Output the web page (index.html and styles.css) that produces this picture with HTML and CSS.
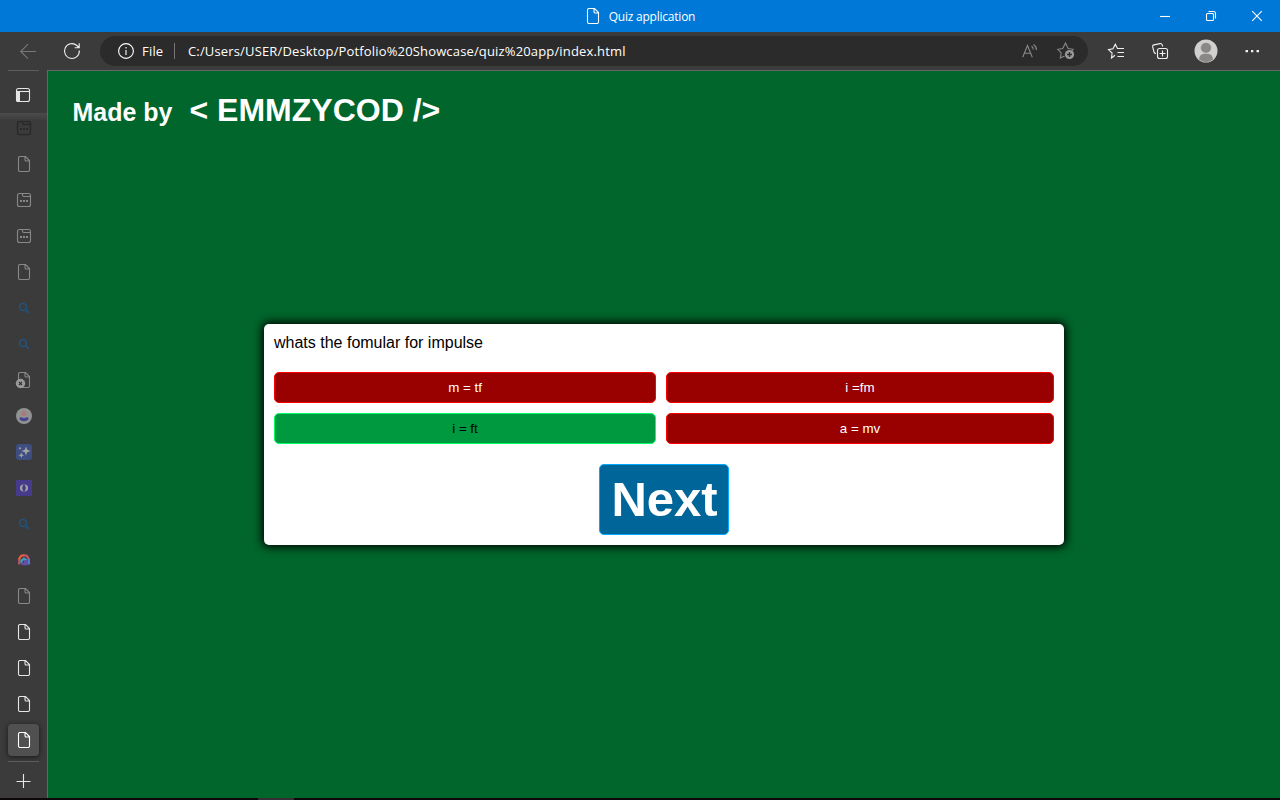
FILE: index.html
```html
<!DOCTYPE html>
<html lang="en">
<head>
<meta charset="utf-8">
<title>Quiz application</title>
<link rel="stylesheet" href="styles.css">
</head>
<body>
<svg class="defs" width="0" height="0">
  <symbol id="page" viewBox="0 0 16 16"><path d="M3.500.5h6l4 4v9.500q0 1.500-1.500 1.500H4Q2.500 15.500 2.500 14V2Q2.500.5 4 .5M9 .5v3.200Q9 5 10.300 5h3.200"/></symbol>
  <symbol id="tab" viewBox="0 0 16 16"><rect x="1.500" y="1.500" width="13" height="13" rx="2"/><path d="M6.500 1.500v1.500q0 1.500 1.500 1.500h6.500"/><path class="solid" d="M4 8h2v2H4zM7 8h2v2H7zM10 8h2v2h-2z"/></symbol>
  <symbol id="search" viewBox="0 0 16 16"><circle cx="7" cy="7" r="3.500"/><path d="M9.500 9.500l3.500 3.500"/></symbol>
</svg>
<div class="window">
  <header class="titlebar">
    <div class="caption"><svg class="icon" viewBox="0 0 16 16"><use href="#page"/></svg><span class="caption-text">Quiz application</span></div>
    <div class="controls">
      <svg class="icon" viewBox="0 0 16 16"><path d="M3 8.500h10"/></svg>
      <svg class="icon" viewBox="0 0 16 16"><rect x="3.500" y="5.500" width="7" height="7" rx="1"/><path d="M5.500 3.500h5q2 0 2 2v5"/></svg>
      <svg class="icon" viewBox="0 0 16 16"><path d="M3.200 3.200l9.600 9.600M12.800 3.200l-9.600 9.600"/></svg>
    </div>
  </header>
  <nav class="toolbar">
    <svg class="icon back" viewBox="0 0 16 16"><path d="M16 8.500H.7M8 1.200L.7 8.500 8 15.700"/></svg>
    <svg class="icon reload" viewBox="0 0 16 16"><path d="M15.300 7.500A7.400 7.400 0 1 1 12.800 2.500L15 4.500M15.200.3v4.500h-4.500"/></svg>
    <div class="address">
      <svg class="icon info" viewBox="0 0 16 16"><circle cx="8" cy="8" r="7.400"/><path d="M8 7v5M8 4v1.400"/></svg>
      <span class="scheme">File</span>
      <span class="bar"></span>
      <span class="url">C:/Users/USER/Desktop/Potfolio%20Showcase/quiz%20app/index.html</span>
      <span class="address-tools">
        <svg class="icon read" viewBox="0 0 16 16"><path d="M.7 14.300L5.500 2.500l4.800 11.800M2.300 10.200h6.300M9.500 3.200q1.800 1 1.800 3.300M11.500 1.500q3 2 3 5.500"/></svg>
        <svg class="icon fav" viewBox="0 0 18 18"><path d="M7.500 14L3.300 16l.9-5L.8 7.300l4.900-.8L8.500 1l2.600 5.500 5 .8-1 1.500"/><circle class="badge" cx="12.500" cy="12.500" r="4.600"/><path class="badge-plus" d="M12.500 10v5M10 12.500h5"/></svg>
      </span>
    </div>
    <div class="actions">
      <svg class="icon" viewBox="0 0 16 16"><path d="M7 12.300L3.500 15l.6-5L.5 6.600l4.500-.8L7.300 1.200l2.200 4.300H16M9.500 9.500h6.500M9.500 13.500h6.500"/></svg>
      <svg class="icon" viewBox="0 0 16 16"><path d="M4 10.500Q2.500 10.500 2 9L.7 4Q.3 2.300 2 1.900L8 .6q1.700-.3 2.200 1.200l.5 1.700"/><rect x="5.500" y="5.500" width="10" height="10" rx="2"/><path d="M10.500 7.500v6M7.500 10.500h6"/></svg>
      <svg class="avatar" viewBox="0 0 24 24"><circle cx="12" cy="12" r="11.500" fill="#d2d0ce"/><path d="M5 20.500q0-6 7-6t7 6q-7 5-14 0z" fill="#8a8886"/><circle cx="12" cy="8.800" r="5.400" fill="#8a8886" stroke="#d2d0ce" stroke-width=".6"/></svg>
      <svg class="icon" viewBox="0 0 16 16"><path class="solid" d="M1.500 7H4v2.300H1.500zM7 7h2.300v2.300H7zM12.500 7H15v2.300h-2.500z"/></svg>
    </div>
  </nav>
  <div class="body">
    <aside class="sidebar">
      <div class="sidebar-head"><svg class="icon" viewBox="0 0 16 16"><rect x="1.500" y="1.500" width="13" height="13" rx="2"/><path d="M2 4.500h12"/><path class="solid" d="M1 4h4v11H3q-2 0-2-2z"/></svg></div>
      <ul class="tabs">
        <li class="tab darkest"><svg class="icon" viewBox="0 0 16 16"><use href="#tab"/></svg></li>
        <li class="tab dim"><svg class="icon" viewBox="0 0 16 16"><use href="#page"/></svg></li>
        <li class="tab dim"><svg class="icon" viewBox="0 0 16 16"><use href="#tab"/></svg></li>
        <li class="tab dim"><svg class="icon" viewBox="0 0 16 16"><use href="#tab"/></svg></li>
        <li class="tab dim"><svg class="icon" viewBox="0 0 16 16"><use href="#page"/></svg></li>
        <li class="tab find"><svg class="icon" viewBox="0 0 16 16"><use href="#search"/></svg></li>
        <li class="tab find"><svg class="icon" viewBox="0 0 16 16"><use href="#search"/></svg></li>
        <li class="tab dim"><svg class="icon" viewBox="0 0 16 16"><use href="#page"/><circle cx="4.500" cy="11.500" r="4.700" fill="#999" stroke="none"/><path d="M3 10l3 3M6 10l-3 3" stroke="#333"/></svg></li>
        <li class="tab"><svg class="icon plain" viewBox="0 0 16 16"><circle cx="8" cy="8" r="8" fill="#929292"/><circle cx="8" cy="5.500" r="2.600" fill="#a87b7b"/><path d="M3.500 10.500Q3.500 9 5.500 9.300L8 10.200l2.500-.9q2-.3 2 1.200-.5 2.800-4.500 2.800t-4.500-2.800z" fill="#474490"/></svg></li>
        <li class="tab"><svg class="icon plain" viewBox="0 0 16 16"><rect width="16" height="16" rx="3" fill="#3f4e80"/><path d="M10 2.500l1.200 3.300 3.300 1.200-3.300 1.200L10 11.500 8.800 8.200 5.500 7l3.300-1.200zM5.300 8.500l.8 2 2 .8-2 .8-.8 2-.8-2-2-.8 2-.8zM4 2.500l.5 1.200 1.200.5-1.200.5L4 6l-.5-1.300-1.200-.5 1.200-.5z" fill="#a3a3a3"/></svg></li>
        <li class="tab"><svg class="icon plain" viewBox="0 0 16 16"><path d="M0 0h16v16H0z" fill="#453a8b"/><path d="M7.500 4.500H6L4 6.500v3l2 2h1.500L6.300 9V7zM8.500 4.500H10l2 2v3l-2 2H8.500L9.700 9V7z" fill="#a0a0a0"/></svg></li>
        <li class="tab find"><svg class="icon" viewBox="0 0 16 16"><use href="#search"/></svg></li>
        <li class="tab"><svg class="icon rainbow" viewBox="0 0 16 16"><path d="M3.200 12.500V7" stroke="#b7526b"/><path d="M2.800 7.500L5 4l3-.8" stroke="#e6603c"/><path d="M8 3.200l3 .8 2 3.500" stroke="#c6526a"/><path d="M12.800 7v5.500" stroke="#5a79d4"/><path d="M5.500 11V8.500L8 6.700l2.500 1.800" stroke="#449bbb"/><path d="M5.500 12h5V9.500H8" stroke="#6650a7"/></svg></li>
        <li class="tab dim"><svg class="icon" viewBox="0 0 16 16"><use href="#page"/></svg></li>
        <li class="tab"><svg class="icon" viewBox="0 0 16 16"><use href="#page"/></svg></li>
        <li class="tab"><svg class="icon" viewBox="0 0 16 16"><use href="#page"/></svg></li>
        <li class="tab"><svg class="icon" viewBox="0 0 16 16"><use href="#page"/></svg></li>
        <li class="tab active"><svg class="icon" viewBox="0 0 16 16"><use href="#page"/></svg></li>
      </ul>
      <div class="new-tab"><svg class="icon" viewBox="0 0 16 16"><path d="M7.500 1v14M.5 8.500h14"/></svg></div>
    </aside>
    <main class="viewport">
      <div class="credit"><span class="made">Made by</span><span class="brand">&lt; EMMZYCOD /&gt;</span></div>
      <section class="card">
        <div class="question">whats the fomular for impulse</div>
        <div class="answers">
          <button class="btn wrong">m = tf</button>
          <button class="btn wrong">i =fm</button>
          <button class="btn correct">i = ft</button>
          <button class="btn wrong">a = mv</button>
        </div>
        <div class="footer"><button class="btn next">Next</button></div>
      </section>
    </main>
  </div>
  <div class="taskbar"><span class="taskbar-item"></span></div>
</div>
</body>
</html>
```

FILE: styles.css
```css
* { box-sizing: border-box; }
body { margin: 0; font-family: "Liberation Sans", Arial, sans-serif; }
.defs { position: absolute; }
.window { width: 1280px; height: 800px; display: flex; flex-direction: column; overflow: hidden; background: #3b3b3b; }
.icon { display: block; flex: none; width: 16px; height: 16px; fill: none; stroke: currentColor; stroke-width: 1.1; overflow: visible; }
.solid { fill: currentColor; stroke: none; }

.titlebar { position: relative; height: 32px; flex: none; background: #0078d7; color: #fff; display: flex; justify-content: center; align-items: center; }
.caption { display: flex; align-items: center; gap: 8px; font: 12px "Open Sans", sans-serif; }
.caption-text { letter-spacing: -0.23px; white-space: nowrap; }
.controls { position: absolute; right: 15px; top: 8px; display: flex; gap: 30px; }

.toolbar { height: 38px; flex: none; display: flex; align-items: center; padding-left: 20px; color: #f0f0f0; font: 13px "Open Sans", sans-serif; }
.back { color: #777; }
.reload { margin-left: 28px; }
.address { width: 988px; height: 30px; margin-left: 20px; border-radius: 15px; background: #2b2b2b; display: flex; align-items: center; padding: 0 13px 0 18px; color: #fff; }
.scheme { margin-left: 8px; width: 32px; letter-spacing: 0.2px; }
.bar { width: 1px; height: 16px; background: #777; }
.url { margin-left: 13px; white-space: nowrap; letter-spacing: 0.155px; }
.address-tools { margin-left: auto; display: flex; align-items: center; gap: 19px; color: #888; }
.fav { width: 18px; height: 18px; }
.badge { fill: #999; stroke: none; }
.badge-plus { stroke: #2b2b2b; stroke-width: 1.3; }
.actions { flex: 1; display: flex; align-items: center; gap: 28px; padding-left: 20px; }
.avatar { width: 24px; height: 24px; margin: 0 -2px; display: block; }

.body { height: 728px; flex: none; display: flex; }
.sidebar { width: 47px; color: #e6e6e6; flex: none; }
.sidebar-head { height: 43px; margin: 0 8px; border-top: 1px solid #5e5e5e; padding: 16px 7px; }
.tabs { list-style: none; margin: 0; padding: 0; height: 648px; background: linear-gradient(#4c4c4c, #3b3b3b 8px); }
.tab { height: 36px; padding: 7px 0 0 16px; }
.tab.dim { color: #888; }
.tab.darkest { color: #292929; }
.tab.darkest .icon { stroke-width: 1.5; }
.tab.find { color: #23527c; }
.tab.find .icon { stroke-width: 1.6; }
.plain { stroke: none; }
.rainbow { stroke-width: 2.3; }
.tab.active { width: 31px; height: 32px; margin: -1px 0 0 8px; padding: 8px; border-radius: 4px; background: #505050; box-shadow: 0 1px 5px #181818; color: #fff; }
.new-tab { width: 31px; margin-left: 8px; border-top: 1px solid #5e5e5e; padding: 11px 8px 0; }

.viewport { flex: 1; border-top: 1px solid #666; border-left: 1px solid #666; background: hsl(145, 100%, 20%); }
.credit { height: 253px; padding: 21px 0 0 24.500px; display: flex; align-items: baseline; color: #fff; font-weight: 700; }
.made { width: 117px; font-size: 24.96px; }
.brand { font-size: 32px; }
.card { width: 800px; height: 221px; margin-left: 216px; padding: 10px; border-radius: 5px; background: #fff; box-shadow: 0 0 10px 2px #000; color: #000; }
.question { font-size: 16px; line-height: 18px; }
.answers { display: grid; grid-template-columns: 382px 388px; grid-auto-rows: 31px; gap: 10px; margin: 20px 0; }
.btn { font-family: inherit; font-size: 13.333px; border: 1px solid; border-radius: 5px; padding: 0 10px; margin: 0; color: #fff; }
.wrong { background: hsl(0, 100%, 30%); border-color: hsl(0, 100%, 50%); }
.correct { background: hsl(145, 100%, 30%); border-color: hsl(145, 100%, 50%); color: #000; }
.footer { display: flex; justify-content: center; }
.next { width: 130px; height: 71px; padding: 0 9px 2px 10px; font-size: 49px; font-weight: 700; background: hsl(200, 100%, 30%); border-color: hsl(200, 100%, 50%); }

.taskbar { height: 2px; flex: none; background: #0b070b; padding-left: 258px; }
.taskbar-item { display: block; width: 36px; height: 2px; background: #352e35; }
```
